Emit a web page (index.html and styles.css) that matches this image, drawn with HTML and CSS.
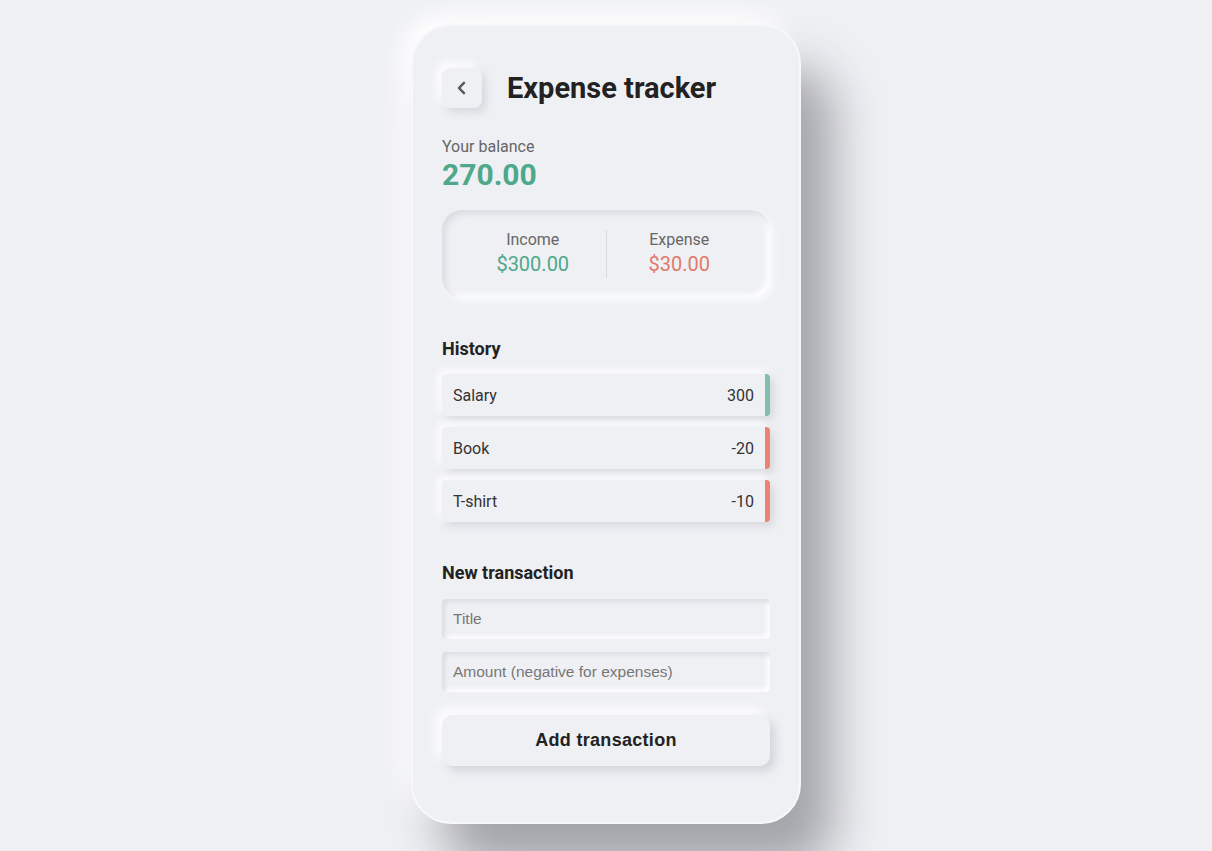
FILE: index.html
```html
<!DOCTYPE html>
<html lang="en">
<head>
  <meta charset="UTF-8">
  <title>Expense tracker</title>
  <link rel="stylesheet" href="styles.css">
</head>
<body>

  <div class="phone">
    <div class="header">
      <button class="back-btn" aria-label="Back">
        <svg width="14" height="14" viewBox="0 0 14 14">
          <path d="M9 1.8 L4 7 L9 12.2" fill="none" stroke="#555" stroke-width="2.4" stroke-linecap="round" stroke-linejoin="round"/>
        </svg>
      </button>
      <h1>Expense tracker</h1>
    </div>

    <div class="balance">
      <div class="balance-label">Your balance</div>
      <div id="balance" class="balance-value">270.00</div>
    </div>

    <div class="summary">
      <div class="summary-col">
        <div class="summary-label">Income</div>
        <div id="income" class="summary-value plus">$300.00</div>
      </div>
      <div class="summary-col">
        <div class="summary-label">Expense</div>
        <div id="expense" class="summary-value minus">$30.00</div>
      </div>
    </div>

    <h3>History</h3>
    <ul id="history" class="history"></ul>

    <h3 class="new-title">New transaction</h3>
    <form id="form" class="tx-form">
      <input type="text" id="title" placeholder="Title">
      <input type="text" id="amount" placeholder="Amount (negative for expenses)">
      <button type="submit" class="add-btn">Add transaction</button>
    </form>
  </div>

  <script>
    let transactions = [
      { title: 'Salary', amount: 300 },
      { title: 'Book', amount: -20 },
      { title: 'T-shirt', amount: -10 }
    ];

    const historyList = document.getElementById('history');

    function render() {
      historyList.innerHTML = '';
      transactions.forEach(t => {
        historyList.innerHTML += `
          <li class="${t.amount < 0 ? 'minus' : 'plus'}">
            <span>${t.title}</span>
            <span>${t.amount}</span>
          </li>`;
      });
      const income = transactions.filter(t => t.amount > 0).reduce((a, t) => a + t.amount, 0);
      const expense = transactions.filter(t => t.amount < 0).reduce((a, t) => a - t.amount, 0);
      document.getElementById('balance').textContent = (income - expense).toFixed(2);
      document.getElementById('income').textContent = '$' + income.toFixed(2);
      document.getElementById('expense').textContent = '$' + expense.toFixed(2);
    }

    document.getElementById('form').addEventListener('submit', e => {
      e.preventDefault();
      const title = document.getElementById('title').value.trim();
      const amount = Number(document.getElementById('amount').value);
      if (!title || !amount) return;
      transactions.push({ title, amount });
      e.target.reset();
      render();
    });

    render();
  </script>
</body>
</html>
```

FILE: styles.css
```css
html {
  background: #eff0f4;
  overflow: hidden;
}
body {
  font-family: Roboto, 'Liberation Sans', sans-serif;
  box-sizing: border-box;
  height: 100vh;
  margin: 0;
  padding: 24px 0 0;
  background: #eff0f4;
  color: #222;
}
.phone {
  box-sizing: border-box;
  width: 390px;
  margin: 0 auto;
  padding: 42px 29px 56px;
  background: #eff0f4;
  border: 2px solid #f7f8fa;
  border-radius: 40px;
  box-shadow: 32px 44px 50px #a3a4a9, -10px -10px 26px #ffffff;
}
.header {
  display: flex;
  align-items: center;
  gap: 25px;
}
.back-btn {
  width: 40px;
  height: 40px;
  display: flex;
  align-items: center;
  justify-content: center;
  padding: 0;
  border: none;
  border-radius: 8px;
  background: #eff0f4;
  box-shadow: 4px 4px 8px #d6d7dc, -5px -5px 10px #ffffff;
  cursor: pointer;
}
h1 {
  margin: 0;
  font-size: 29px;
  font-weight: 700;
  color: #222;
}
.balance {
  margin-top: 29px;
}
.balance-label {
  font-size: 16px;
  line-height: 20px;
  color: #666;
}
.balance-value {
  font-size: 30px;
  line-height: 36px;
  font-weight: 700;
  color: #4ea88b;
}
.summary {
  display: flex;
  margin-top: 17px;
  padding: 20px 18px;
  border-radius: 20px;
  background: #eff0f4;
  box-shadow: inset 4px 4px 6px #dcdde2, inset -3px -3px 6px #ffffff, 3px 3px 6px #fafbfc;
}
.summary-col {
  flex: 1;
  text-align: center;
}
.summary-col:first-child {
  border-right: 1px solid #d9dadf;
}
.summary-label {
  font-size: 16px;
  line-height: 20px;
  color: #666;
}
.summary-value {
  font-size: 20px;
  line-height: 28px;
}
.summary-value.plus { color: #4ea88b; }
.summary-value.minus { color: #e07a6a; }
h3 {
  margin: 40px 0 0;
  font-size: 18px;
  line-height: 22px;
  font-weight: 700;
  color: #222;
}
.history {
  list-style: none;
  margin: 14px 0 0;
  padding: 0;
}
.history li {
  display: flex;
  justify-content: space-between;
  align-items: center;
  height: 42px;
  box-sizing: border-box;
  padding: 0 11px;
  margin-bottom: 11px;
  font-size: 16px;
  color: #333;
  background: #eff0f4;
  border-radius: 4px;
  box-shadow: 4px 4px 8px #d7d8dd, -4px -4px 8px #ffffff;
}
.history li.plus { border-right: 5px solid #7ec0ab; }
.history li.minus { border-right: 5px solid #ee8272; }
.new-title {
  margin-top: 40px;
}
.tx-form {
  display: flex;
  flex-direction: column;
  margin-top: 15px;
}
.tx-form input {
  height: 40px;
  box-sizing: border-box;
  margin-bottom: 13px;
  padding: 0 11px;
  border: none;
  border-radius: 4px;
  font-family: 'Liberation Sans', Arial, sans-serif;
  font-size: 15.5px;
  color: #333;
  background: #eff0f4;
  outline: none;
  box-shadow: inset 3px 3px 5px #dcdde2, inset -3px -3px 5px #ffffff;
}
.tx-form input::placeholder {
  color: #777;
}
.add-btn {
  height: 51px;
  margin-top: 10px;
  border: none;
  border-radius: 10px;
  font-family: 'Liberation Sans', Arial, sans-serif;
  font-size: 18px;
  font-weight: 700;
  letter-spacing: 0.3px;
  color: #222;
  background: #eff0f4;
  box-shadow: 5px 5px 10px #d3d4d9, -6px -6px 12px #ffffff;
  cursor: pointer;
}
```
